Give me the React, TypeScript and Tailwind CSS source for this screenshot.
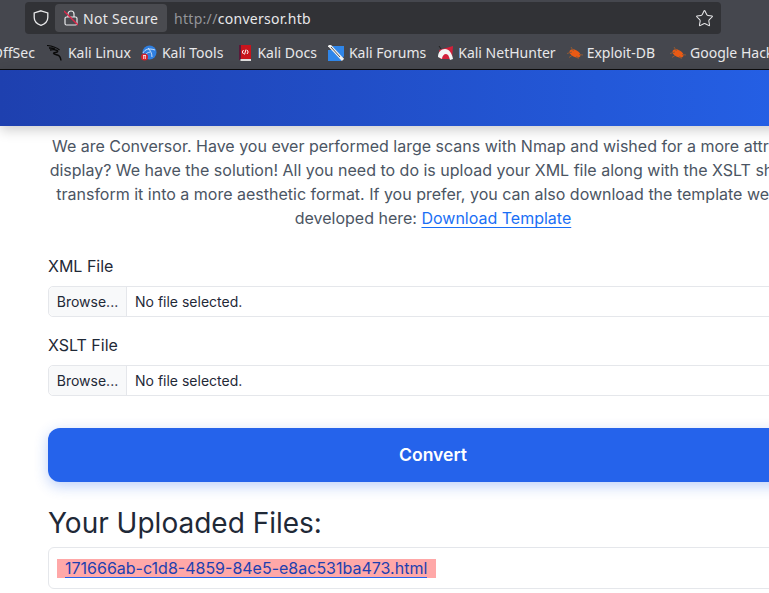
import { Star } from "lucide-react";

function KaliDragon() {
  return (
    <svg width="16" height="16" viewBox="0 0 16 16" fill="none" stroke="#0a0a0a" strokeWidth="1.2">
      <path d="M0 .5c2 .2 5 .8 7 1.500 2 .7 4 1.500 5.500 3" />
      <path d="M2 3c2-.2 4 .2 6 1.200M3 5c2-.5 5-.5 7 .5 1 .5 1 1.500-.5 1.800-1.500.3-3 .2-3 1 0 1 2 1.200 4 1.700 2 .6 3 2 3.500 5.500" strokeWidth="1.400" />
    </svg>
  );
}

function KaliTools() {
  return (
    <svg width="16" height="16" viewBox="0 0 16 16">
      <circle cx="8.500" cy="7.500" r="7" fill="#2f7fe0" />
      <path d="M2 8c2-4 6-5 12-3M7 3c2 2 4 5 4 9M9 7c-2 .5-3 1-4 2" stroke="#d7e8fa" strokeWidth="0.900" fill="none" />
      <circle cx="3.500" cy="12" r="3.500" fill="#d3202a" />
      <path d="M2 10.500h3M2.700 11v3M4.300 11v3" stroke="#fff" strokeWidth="0.800" />
    </svg>
  );
}

function KaliDocs() {
  return (
    <svg width="14" height="16" viewBox="0 0 14 16">
      <rect x="1" y="0" width="12" height="14" fill="#c8141c" />
      <rect x="1" y="0" width="2" height="15" fill="#5a1a3a" />
      <rect x="2.500" y="14" width="10.500" height="2" fill="#ddd" />
      <path d="M5.500 5 4.300 7l1.200 2M9 5l1.200 2L9 9M8 4.500 6.500 9.500" stroke="#fff" strokeWidth="1" fill="none" />
    </svg>
  );
}

function KaliForums() {
  return (
    <svg width="16" height="16" viewBox="0 0 16 16">
      <path d="M0 5h5l-1-4h12v10l-3 5H0z" fill="#2f86ea" />
      <path d="M1 0l14 15" stroke="#f2f2f2" strokeWidth="3" />
      <path d="M3 2l9 10" stroke="#444" strokeWidth="0.900" />
    </svg>
  );
}

function NetHunter() {
  return (
    <svg width="16" height="16" viewBox="0 0 16 16">
      <path d="M1 5 15 1l-1 13H2z" fill="#d3203a" />
      <path d="M0 12c0-5 3-8 7-8 4 0 7 4 8 10l-3 1c-1-4-2-6-4-6s-4 2-4 5z" fill="#f4f4f4" />
      <path d="M1 1l2 3" stroke="#222" strokeWidth="1" />
    </svg>
  );
}

function ExploitDb() {
  return (
    <svg width="16" height="16" viewBox="0 0 16 16">
      <ellipse cx="8" cy="8.500" rx="6" ry="3.500" transform="rotate(28 8 8.500)" fill="#ea5a14" />
      <path d="M0 8.500 5 7M2 12.500l3-2M4 2l2.500 4M11.500 14l-2-3M16 10l-4-.5" stroke="#8f5a35" strokeWidth="1" />
    </svg>
  );
}

function Bookmark({ icon, label, className }: { icon?: React.ReactNode; label: string; className?: string }) {
  return (
    <div className={`flex items-center shrink-0 ${className ?? ""}`}>
      {icon}
      <span>{label}</span>
    </div>
  );
}

function FileField({ label }: { label: string }) {
  return (
    <div className="mb-[16px]">
      <div className="text-[16px] leading-[24px] text-[#1f2937] mb-[8px]">{label}</div>
      <div className="flex h-[31px] border border-[#e5e7eb] rounded-[5px] bg-white text-[14px] text-[#1f2937]">
        <div className="w-[78px] flex items-center justify-center bg-[#f8f9fa] border-r border-[#e5e7eb] rounded-l-[5px]">
          Browse...
        </div>
        <div className="flex items-center pl-[8px]">No file selected.</div>
      </div>
    </div>
  );
}

export default function App() {
  return (
    <div className="w-[769px] h-[593px] overflow-hidden bg-white font-['Inter',sans-serif]">
      {/* browser chrome */}
      <div className="h-[69px] w-[769px] bg-[#45474e] font-['Noto_Sans',sans-serif] text-[#e8e8ea]">
        <div className="h-[36px] pt-[2px] pl-[25px]">
          <div className="w-[696px] h-[32px] rounded-[4px] bg-[#313236] flex items-center pl-[8px] pr-[7px]">
            <svg width="16" height="16" viewBox="0 0 16 16" fill="none" stroke="#e8e8ea" strokeWidth="1.300">
              <path d="M8 .8 14.800 3v4.500c0 4-3 6.500-6.800 7.800C4.200 14 1.200 11.500 1.200 7.500V3z" />
            </svg>
            <div className="ml-[6px] h-[28px] w-[112px] rounded-[4px] bg-[#4a4b50] flex items-center pl-[9px] gap-[5px] text-[14px] tracking-[0.3px]">
              <svg width="14" height="16" viewBox="0 0 14 16" fill="none" className="shrink-0">
                <rect x="1" y="7" width="12" height="8" rx="1.500" stroke="#e8e8ea" strokeWidth="1.200" />
                <path d="M4 7V4a3 3 0 0 1 6 0v3" stroke="#e8e8ea" strokeWidth="1.200" />
                <path d="M0 1 14 15" stroke="#e0264a" strokeWidth="1.300" />
              </svg>
              <span>Not Secure</span>
            </div>
            <div className="ml-[7px] text-[14px] tracking-[0.3px]">
              <span className="text-[#94959a]">http://</span>conversor.htb
            </div>
            <Star size={19} strokeWidth={1.3} className="ml-auto text-[#e8e8ea]" />
          </div>
        </div>
        <div className="h-[33px] flex items-center text-[14px] whitespace-nowrap overflow-hidden">
          <Bookmark label="OffSec" className="-ml-[8px] mr-[12px]" />
          <Bookmark icon={<KaliDragon />} label="Kali Linux" className="gap-[5px] mr-[10px]" />
          <Bookmark icon={<KaliTools />} label="Kali Tools" className="gap-[5px] mr-[15px]" />
          <Bookmark icon={<KaliDocs />} label="Kali Docs" className="gap-[5px] mr-[11px]" />
          <Bookmark icon={<KaliForums />} label="Kali Forums" className="gap-[5px] mr-[12px]" />
          <Bookmark icon={<NetHunter />} label="Kali NetHunter" className="gap-[4px] mr-[11px]" />
          <Bookmark icon={<ExploitDb />} label="Exploit-DB" className="gap-[4px] mr-[15px]" />
          <Bookmark icon={<ExploitDb />} label="Google Hacking DB" className="gap-[4px]" />
        </div>
      </div>
      <div className="h-[1px] bg-[#0c0c0d]" />

      {/* page */}
      <div className="h-[56px] w-[866px] bg-gradient-to-r from-[#1e40af] to-[#2563eb] shadow-[0_4px_12px_rgba(0,0,0,0.2)]" />
      <div className="w-[770px] ml-[48px] pt-[8px] text-[#1f2937]">
        <p className="w-[770px] text-center text-[16px] leading-[24px] text-[#4b5563] mb-[24px]">
          We are Conversor. Have you ever performed large scans with Nmap and wished for a more attractive
          display? We have the solution! All you need to do is upload your XML file along with the XSLT sheet to
          transform it into a more aesthetic format. If you prefer, you can also download the template we have
          developed here:{" "}
          <a className="text-[#1a6ff5] underline underline-offset-[3px]">Download Template</a>
        </p>
        <FileField label="XML File" />
        <FileField label="XSLT File" />
        <div className="mt-[32px] h-[54px] flex items-center justify-center rounded-[12px] bg-[#2563eb] text-white font-semibold text-[17.6px] shadow-[0_4px_14px_rgba(37,99,235,0.3)]">
          Convert
        </div>
        <h2 className="mt-[21px] text-[28px] leading-[40px] text-[#1f2937]">Your Uploaded Files:</h2>
        <div className="mt-[4px] h-[42px] border border-[#e5e7eb] rounded-[6px] flex items-center pl-[8px]">
          <span className="bg-[#ffa8a8] pl-[8px] pr-[9px] h-[19px] flex items-center">
            <a className="text-[#1e40af] text-[16px] leading-[19px] h-[19px] border-b border-[#2563eb]">
              171666ab-c1d8-4859-84e5-e8ac531ba473.html
            </a>
          </span>
        </div>
      </div>
    </div>
  );
}
